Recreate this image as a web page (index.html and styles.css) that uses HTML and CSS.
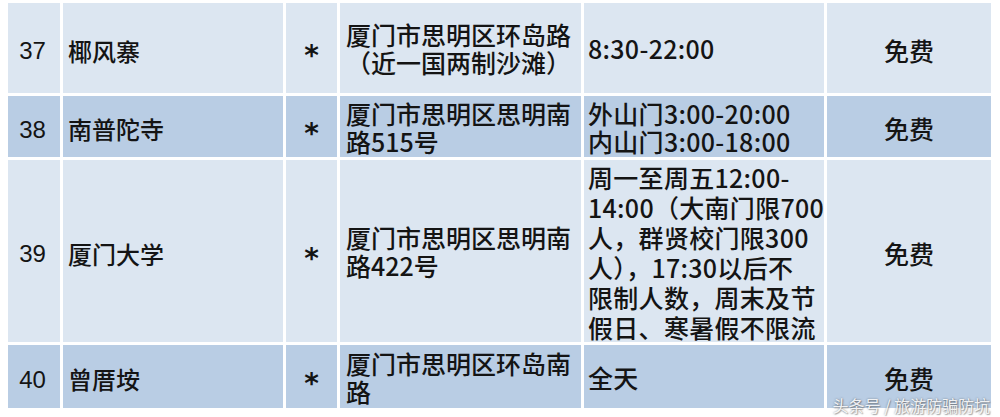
FILE: index.html
```html
<!DOCTYPE html>
<html lang="zh">
<head>
<meta charset="utf-8">
<link rel="stylesheet" href="styles.css">
</head>
<body>
<div class="page">
  <div class="grid">
    <div class="cell light num">37</div>
    <div class="cell light name">椰风寨</div>
    <div class="cell light star">*</div>
    <div class="cell light addr">厦门市思明区环岛路<br>（近一国两制沙滩）</div>
    <div class="cell light time">8:30-22:00</div>
    <div class="cell light fee">免费</div>

    <div class="cell dark num">38</div>
    <div class="cell dark name">南普陀寺</div>
    <div class="cell dark star">*</div>
    <div class="cell dark addr">厦门市思明区思明南<br>路515号</div>
    <div class="cell dark time">外山门3:00-20:00<br>内山门3:00-18:00</div>
    <div class="cell dark fee">免费</div>

    <div class="cell light num">39</div>
    <div class="cell light name">厦门大学</div>
    <div class="cell light star">*</div>
    <div class="cell light addr">厦门市思明区思明南<br>路422号</div>
    <div class="cell light time tall">周一至周五12:00-<br>14:00（大南门限700<br>人，群贤校门限300<br>人），17:30以后不<br>限制人数，周末及节<br>假日、寒暑假不限流</div>
    <div class="cell light fee">免费</div>

    <div class="cell dark num">40</div>
    <div class="cell dark name">曾厝垵</div>
    <div class="cell dark star">*</div>
    <div class="cell dark addr">厦门市思明区环岛南<br>路</div>
    <div class="cell dark time">全天</div>
    <div class="cell dark fee">免费</div>
  </div>
  <div class="watermark">头条号 / 旅游防骗防坑</div>
</div>
</body>
</html>
```
FILE: styles.css
```css
html, body {
  margin: 0;
  padding: 0;
  background: #ffffff;
}
.page {
  position: relative;
  width: 1000px;
  height: 417px;
  overflow: hidden;
  padding: 3px 0 0 8px;
  box-sizing: border-box;
  font-family: "Noto Sans CJK SC", "Liberation Sans", sans-serif;
  color: #141414;
}
.grid {
  display: grid;
  grid-template-columns: 52px 220px 51px 241px 240px 164px;
  grid-template-rows: 90px 61px 182px 63px;
  column-gap: 3px;
  row-gap: 3px;
}
.cell {
  display: flex;
  align-items: center;
  font-size: 25px;
  line-height: 29px;
  font-weight: 500;
  overflow: hidden;
  white-space: nowrap;
  box-sizing: border-box;
}
.light { background: #dce6f1; }
.dark { background: #b9cde4; }
.num {
  justify-content: center;
  font-family: "Liberation Sans", sans-serif;
  font-weight: 400;
  font-size: 24px;
  padding-top: 5px;
  padding-right: 3px;
}
.name {
  padding-left: 5px;
  padding-top: 4px;
  font-size: 24px;
}
.star {
  justify-content: center;
  font-family: "DejaVu Sans", sans-serif;
  font-weight: 700;
  font-size: 28px;
  line-height: 29px;
  padding-top: 14px;
}
.addr {
  padding-left: 6px;
  line-height: 28px;
}
.time {
  padding-left: 4px;
  line-height: 28px;
  letter-spacing: 0.3px;
}
.time.tall {
  line-height: 30px;
  padding-top: 2px;
}
.fee {
  justify-content: center;
  padding-top: 4px;
}
.watermark {
  position: absolute;
  right: 10px;
  bottom: 2px;
  font-size: 16px;
  line-height: 20px;
  color: rgba(255, 255, 255, 0.9);
  text-shadow: 0 0 2px rgba(60, 60, 60, 0.6), 1px 1px 1px rgba(80, 80, 80, 0.4);
  font-family: "Noto Sans CJK SC", sans-serif;
}
```
